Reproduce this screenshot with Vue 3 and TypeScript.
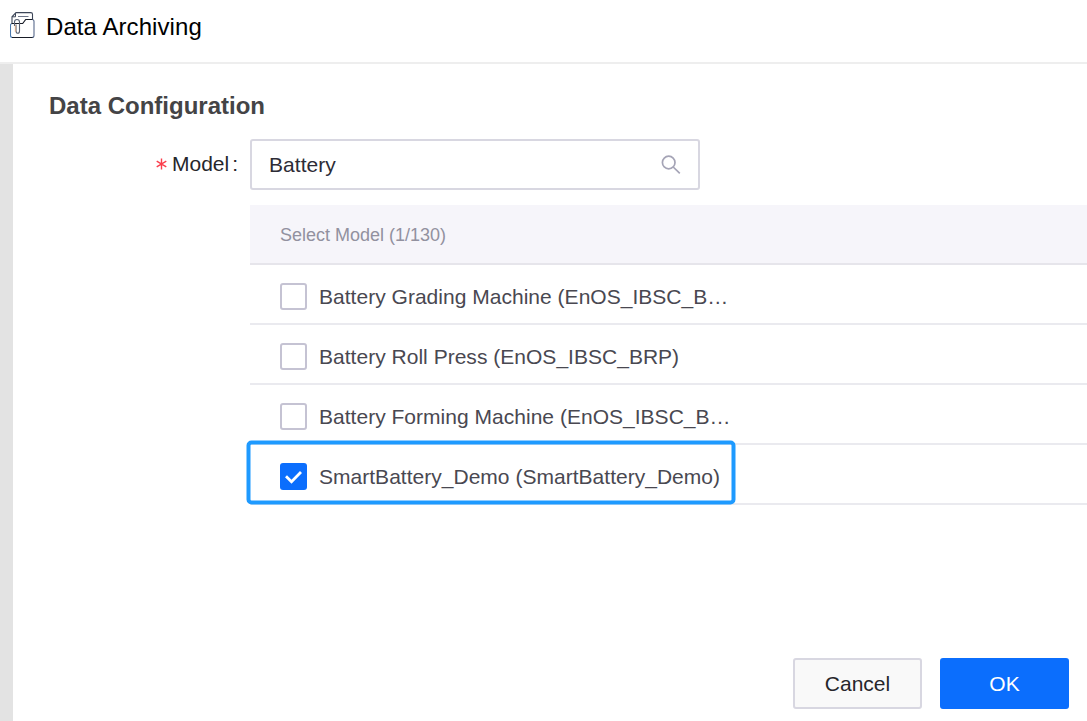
<script setup lang="ts">
import { ref } from 'vue'

interface ModelOption {
  label: string
  checked: boolean
}

const query = ref('Battery')
const total = 130
const selected = ref(1)
const models = ref<ModelOption[]>([
  { label: 'Battery Grading Machine (EnOS_IBSC_B…', checked: false },
  { label: 'Battery Roll Press (EnOS_IBSC_BRP)', checked: false },
  { label: 'Battery Forming Machine (EnOS_IBSC_B…', checked: false },
  { label: 'SmartBattery_Demo (SmartBattery_Demo)', checked: true },
])

function toggle(model: ModelOption) {
  model.checked = !model.checked
  selected.value += model.checked ? 1 : -1
}
</script>

<template>
  <div class="window">
    <header class="titlebar">
      <svg class="archive-icon" width="26" height="28" viewBox="0 0 26 28" fill="none">
        <path d="M2 11V4.800L6 .6H20.800Q22.500 .6 22.500 2.300V7.500" stroke="#3d4658" stroke-width="1.100" />
        <path d="M2.200 4.800H5.500V1.200" stroke="#3d4658" stroke-width="1" />
        <path d="M8 4.500H18.500" stroke="#6d7488" stroke-width="1" />
        <path d="M22 7.500Q24 7.500 24 9.500V23.500Q24 25.500 22 25.500" stroke="#596a8c" stroke-width="1.100" />
        <path d="M2.500 25.500Q.500 25.500 .500 23.500V13Q.500 11.500 2.500 11.500" stroke="#4a78ad" stroke-width="1.100" />
        <path d="M1.500 11.500H12.700L15.700 7.500H22.500M2 25.500H22.500" stroke="#181c26" stroke-width="1.200" />
        <path d="M4.500 14V10Q4.500 7.500 7 7.500T9.500 10V19Q9.500 21.300 7.800 21.300T6 19V12.500" stroke="#596173" stroke-width="1.100" />
        <path d="M5.300 13V20" stroke="#efad78" stroke-width=".7" />
      </svg>
      <h1 class="title">Data Archiving</h1>
    </header>
    <main class="body">
      <h2 class="section-title">Data Configuration</h2>
      <div class="form-row">
        <label class="field-label" for="model-search">
          <svg class="required" width="11" height="12" viewBox="0 0 11 12">
            <path d="M5.500 .5V11.500M.7 3.200L10.300 8.800M10.300 3.200L.7 8.800" stroke="#fb3e4c" stroke-width="1.400" />
          </svg>
          <span class="label-text">Model</span><span class="colon">:</span>
        </label>
        <div class="field">
          <div class="search-box">
            <input id="model-search" v-model="query" class="search-input" />
            <svg class="search-icon" width="20" height="20" viewBox="0 0 20 20" fill="none" stroke="#a5a4b6" stroke-width="1.700">
              <circle cx="7.700" cy="7.500" r="6.300" />
              <path d="M12.200 12L18.800 18.300" />
            </svg>
          </div>
          <div class="list">
            <div class="list-head">Select Model ({{ selected }}/{{ total }})</div>
            <div v-for="model in models" :key="model.label" class="row" @click="toggle(model)">
              <span class="checkbox" :class="{ checked: model.checked }">
                <svg v-if="model.checked" width="27" height="27" viewBox="0 0 27 27" fill="none">
                  <path d="M6 13.200L11.500 18.700L21 9" stroke="#fff" stroke-width="2.800" />
                </svg>
              </span>
              <span class="row-label">{{ model.label }}</span>
            </div>
            <svg class="highlight" width="490" height="66" viewBox="0 0 490 66" fill="none">
              <rect x="2.500" y="2.500" width="485" height="60" rx="3" stroke="#1e9aff" stroke-width="4" />
            </svg>
          </div>
        </div>
      </div>
      <footer class="actions">
        <button class="btn">Cancel</button>
        <button class="btn primary">OK</button>
      </footer>
    </main>
  </div>
</template>

<style>
body {
  margin: 0;
  overflow: hidden;
}
</style>

<style scoped>
.window {
  box-sizing: border-box;
  width: 1087px;
  height: 721px;
  display: flex;
  flex-direction: column;
  overflow: hidden;
  background: #fff;
  font-family: "Liberation Sans", Arial, sans-serif;
}
.titlebar {
  box-sizing: border-box;
  height: 64px;
  flex: none;
  display: flex;
  align-items: flex-start;
  padding: 12px 0 0 10px;
  border-bottom: 2px solid #eeeeee;
}
.title {
  margin: 0 0 0 10px;
  font-size: 24px;
  line-height: 30px;
  font-weight: 400;
  letter-spacing: 0.08px;
  color: #000;
}
.body {
  box-sizing: border-box;
  flex: 1;
  display: flex;
  flex-direction: column;
  border-left: 13px solid #e3e3e3;
}
.section-title {
  margin: 27px 0 0 36px;
  font-size: 24px;
  line-height: 30px;
  font-weight: 700;
  color: #444446;
}
.form-row {
  display: flex;
  margin-top: 18px;
}
.field-label {
  box-sizing: border-box;
  width: 237px;
  height: 50px;
  flex: none;
  display: flex;
  align-items: center;
  justify-content: flex-end;
  padding-right: 12px;
  font-size: 21px;
  color: #26262b;
}
.required {
  margin-right: 5px;
}
.colon {
  margin-left: 3px;
}
.field {
  flex: 1;
}
.search-box {
  box-sizing: border-box;
  width: 450px;
  height: 51px;
  display: flex;
  align-items: center;
  padding: 0 17px;
  border: 2px solid #d8d7e1;
  border-radius: 3px;
}
.search-input {
  flex: 1;
  min-width: 0;
  padding: 0;
  border: 0;
  outline: 0;
  background: transparent;
  font: 21px/30px "Liberation Sans", Arial, sans-serif;
  letter-spacing: 0.05px;
  color: #2d2c36;
}
.list {
  position: relative;
  margin-top: 15px;
}
.list-head {
  box-sizing: border-box;
  height: 60px;
  padding-left: 30px;
  border-bottom: 2px solid #e6e5eb;
  background: #f6f5fa;
  font-size: 18px;
  line-height: 60px;
  color: #92919f;
}
.row {
  box-sizing: border-box;
  height: 60px;
  display: flex;
  align-items: center;
  gap: 12px;
  padding: 5px 0 0 30px;
  border-bottom: 2px solid #eaeaef;
}
.checkbox {
  box-sizing: border-box;
  width: 27px;
  height: 27px;
  display: flex;
  flex: none;
  border: 2px solid #c5c3d3;
  border-radius: 3px;
}
.checkbox.checked {
  border: 0;
  background: #0b6efd;
}
.row-label {
  font-size: 21px;
  line-height: 30px;
  letter-spacing: 0.02px;
  white-space: nowrap;
  color: #494851;
}
.highlight {
  position: absolute;
  left: -4px;
  top: 235px;
}
.actions {
  display: flex;
  justify-content: flex-end;
  gap: 18px;
  margin-top: auto;
  padding: 0 18px 12px 0;
}
.btn {
  box-sizing: border-box;
  width: 129px;
  height: 51px;
  padding: 0;
  border: 2px solid #d8d7e1;
  border-radius: 3px;
  background: #f9f9f9;
  font: 21px/30px "Liberation Sans", Arial, sans-serif;
  color: #26262b;
}
.btn.primary {
  border-color: #0b6efd;
  background: #0b6efd;
  color: #fff;
}
</style>
